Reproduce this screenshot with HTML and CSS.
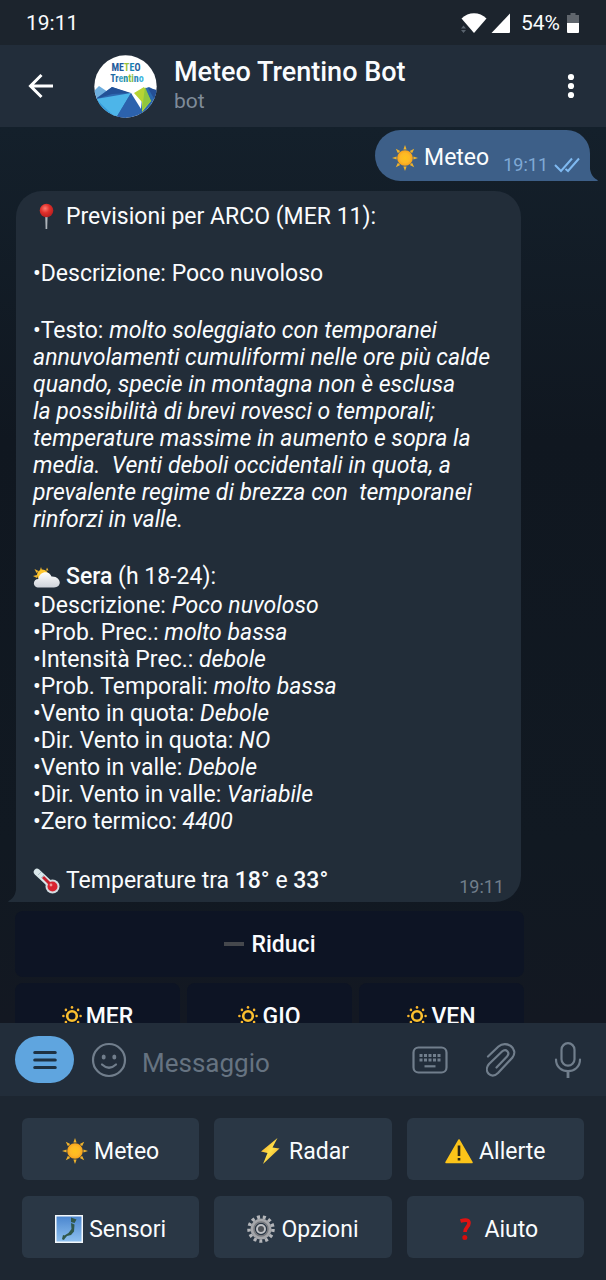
FILE: index.html
```html
<!DOCTYPE html>
<html lang="it">
<head>
<meta charset="utf-8">
<meta name="viewport" content="width=device-width, initial-scale=1">
<title>Meteo Trentino Bot</title>
<link rel="stylesheet" href="styles.css">
</head>
<body>
<svg class="defs" aria-hidden="true">
  <defs>
    <radialGradient id="gold"><stop offset="0" stop-color="#ffc21c"/><stop offset=".6" stop-color="#fdb827"/><stop offset="1" stop-color="#f7a21b"/></radialGradient>
    <linearGradient id="cloud" x1="0" y1="0" x2="0" y2="1"><stop offset="0" stop-color="#fff"/><stop offset="1" stop-color="#cfd3da"/></linearGradient>
    <linearGradient id="bolt" x1="0" y1="0" x2="1" y2="1"><stop offset="0" stop-color="#f59a1c"/><stop offset=".5" stop-color="#ffe14a"/><stop offset="1" stop-color="#ee9a1a"/></linearGradient>
    <linearGradient id="sea" x1="0" y1="0" x2="0" y2="1"><stop offset="0" stop-color="#4b86cf"/><stop offset="1" stop-color="#8dc0ef"/></linearGradient>
    <radialGradient id="pinhead" cx=".4" cy=".35" r=".65"><stop offset="0" stop-color="#ff7b70"/><stop offset=".5" stop-color="#e0302b"/><stop offset="1" stop-color="#b81f1f"/></radialGradient>
  </defs>
  <symbol id="sun" viewBox="0 0 26 26">
    <path fill="#f0b32c" d="M13 0l1.600 4.600h-3.200zM13 26l1.600-4.600h-3.200zM0 13l4.600-1.600v3.200zM26 13l-4.600-1.600v3.200zM3.800 3.800l4.400 2.100-2.300 2.300zM22.200 3.800l-4.400 2.100 2.300 2.300zM3.800 22.200l4.400-2.100-2.300-2.300zM22.200 22.200l-4.400-2.100 2.300-2.300z"/>
    <circle cx="13" cy="13" r="7.800" fill="url(#gold)"/>
  </symbol>
  <symbol id="sunring" viewBox="0 0 20 20">
    <circle cx="10" cy="10" r="4.800" fill="none" stroke="#fbc02f" stroke-width="2.600"/>
    <g fill="#f8b62d"><circle cx="10" cy="1.400" r="1.300"/><circle cx="10" cy="18.600" r="1.300"/><circle cx="1.400" cy="10" r="1.300"/><circle cx="18.600" cy="10" r="1.300"/><circle cx="3.900" cy="3.900" r="1.300"/><circle cx="16.100" cy="3.900" r="1.300"/><circle cx="3.900" cy="16.100" r="1.300"/><circle cx="16.100" cy="16.100" r="1.300"/></g>
  </symbol>
</svg>

<div class="statusbar">
  <span>19:11</span>
  <div class="indicators">
    <svg width="28" height="22" viewBox="0 0 28 22" aria-label="Wi-Fi"><path fill="#fff" d="M14 21L1.500 6.500C8.500-.5 19.500-.5 26.500 6.500z"/><path fill="#59636e" d="M3.500 13.500l2.500 3H1zM3.500 21l2.500-3H1z"/></svg>
    <svg width="20" height="20" viewBox="0 0 20 20" aria-label="Segnale"><path fill="#fff" d="M19 .5v18.500q0 1-1 1H.5z"/></svg>
    <span class="percent">54%</span>
    <svg width="12" height="20" viewBox="0 0 12 20" aria-label="Batteria"><path fill="#60666d" d="M3.500 0h5v2H12v8H0V2h3.500z"/><path fill="#fff" d="M0 10h12v9q0 1-1 1H1q-1 0-1-1z"/></svg>
  </div>
</div>

<header class="topbar">
  <button class="icon-button" aria-label="Indietro"><svg width="26" height="26" viewBox="0 0 26 26" fill="none" stroke="#fff" stroke-width="3"><path d="M13.500 2L2.500 13l11 11M3 13h22"/></svg></button>
  <svg class="avatar" width="63" height="63" viewBox="0 0 63 63" role="img" aria-label="Meteo Trentino">
    <clipPath id="disc"><circle cx="31.500" cy="31.500" r="31.200"/></clipPath>
    <g clip-path="url(#disc)">
      <path fill="#fff" d="M0 0h63v63H0z"/>
      <path fill="#6eaede" d="M0 36l5-5 9 6-12 8H0z"/>
      <path fill="#2e68b0" d="M0 45l18-13 20 7-6 24H0z"/>
      <path fill="#235197" d="M2 44l16-12 19 6-19 1z"/>
      <path fill="#4db5e9" d="M2 44l35-6-15 25H0z"/>
      <path fill="#379bd9" d="M2 44l19 18H0z"/>
      <path fill="#2c62ad" d="M37 38l10 16 4 9H22z"/>
      <path fill="#2b69ae" d="M49 34l6-2 8 4v27H46z"/>
      <path fill="#244f96" d="M54 33l9 2v14z"/>
      <path fill="#b7d433" d="M40 38l10-6 7 14-9 11V47z"/>
      <path fill="#8fc63f" d="M51 32l6 14-9 9z"/>
    </g>
    <g class="logo-text" text-anchor="middle">
      <text x="32" y="16"><tspan fill="#1f5c9d">ME</tspan><tspan fill="#9ac43c">T</tspan><tspan fill="#1685b5">E</tspan><tspan fill="#1f5c9d">O</tspan></text>
      <text x="33" y="27"><tspan fill="#1f6ca5">Tr</tspan><tspan fill="#3fa4c9">e</tspan><tspan fill="#178a9e">n</tspan><tspan fill="#84bd40">ti</tspan><tspan fill="#2383b5">n</tspan><tspan fill="#40b5dd">o</tspan></text>
    </g>
  </svg>
  <div class="peer">
    <h1>Meteo Trentino Bot</h1>
    <p>bot</p>
  </div>
  <button class="icon-button" aria-label="Altre opzioni"><svg width="8" height="26" viewBox="0 0 8 26" fill="#fff"><circle cx="4" cy="4" r="3.100"/><circle cx="4" cy="13" r="3.100"/><circle cx="4" cy="22" r="3.100"/></svg></button>
</header>

<main class="chat">
  <div class="bubble outgoing">
    <svg width="26" height="26" role="img" aria-label="Sole"><use href="#sun"/></svg>
    <span>Meteo</span>
    <time class="stamp">19:11</time>
    <svg class="ticks" width="26" height="16" viewBox="0 0 26 16" fill="none" stroke="#7fb9f0" stroke-width="2" aria-label="Letto"><path d="M1 8l6 6L18 1.500M11.500 12l2.500 2L25 1.500"/></svg>
    <svg class="tail-out" width="18" height="26" viewBox="0 0 18 26" aria-hidden="true"><path fill="#3d5f88" d="M0 0h9.500v8c0 8 2 14 8 17 .5 1 0 1-1 1H0z"/></svg>
  </div>

  <section class="group">
    <article class="bubble incoming">
      <p class="line"><svg class="emoji" width="27" height="27" viewBox="0 0 27 27" role="img" aria-label="Puntina"><path fill="#aeb4ba" d="M12.200 12h2.400l-.4 14h-1.600z"/><circle cx="13.500" cy="7.500" r="6.800" fill="url(#pinhead)"/></svg>Previsioni per ARCO (MER 11):</p>
      <p>•Descrizione: Poco nuvoloso</p>
      <p>•Testo: <i>molto soleggiato con temporanei annuvolamenti cumuliformi nelle ore più calde quando, specie in montagna non è esclusa la&nbsp;possibilità di brevi rovesci o temporali; temperature massime in aumento e sopra la media.&nbsp; Venti deboli occidentali in quota, a prevalente regime di brezza con&nbsp; temporanei rinforzi in valle.</i></p>
      <div class="period">
        <p class="line"><svg class="emoji" width="27" height="27" viewBox="0 0 27 27" role="img" aria-label="Poco nuvoloso"><path fill="#f3b72d" d="M8 4l1 3-2 0zM1.500 6l4 2-2 2zM14 4.500l-1 3 2.500 0zM0 13l4-1v3z"/><circle cx="9.500" cy="12" r="5.500" fill="#ffc730"/><path fill="url(#cloud)" d="M6 24.500C-1 24.500-.5 16 5.500 16 6 8.500 16 6.500 18.500 13.500c10-.5 11 11 2.500 11z"/></svg><span><b>Sera</b> (h 18-24):</span></p>
        <ul>
          <li>•Descrizione: <i>Poco nuvoloso</i></li>
          <li>•Prob. Prec.: <i>molto bassa</i></li>
          <li>•Intensità Prec.: <i>debole</i></li>
          <li>•Prob. Temporali: <i>molto bassa</i></li>
          <li>•Vento in quota: <i>Debole</i></li>
          <li>•Dir. Vento in quota: <i>NO</i></li>
          <li>•Vento in valle: <i>Debole</i></li>
          <li>•Dir. Vento in valle: <i>Variabile</i></li>
          <li>•Zero termico: <i>4400</i></li>
        </ul>
      </div>
      <div class="last-line">
        <p class="line"><svg class="emoji" width="27" height="27" viewBox="0 0 27 27" role="img" aria-label="Termometro"><path stroke="#d9e6ea" stroke-width="6.500" stroke-linecap="round" d="M4 5l15 14"/><path stroke="#aabfc8" stroke-width="1" d="M5 8l3-3M8 11l3-3"/><circle cx="19.500" cy="19.500" r="7" fill="#d4dde1"/><path stroke="#c8202d" stroke-width="3" d="M10 10l9 9"/><circle cx="19.500" cy="19.500" r="5" fill="#d8232f"/><circle cx="18" cy="18" r="1.400" fill="#f29a9a"/></svg><span>Temperature tra <b>18°</b> e <b>33°</b></span></p>
        <time class="stamp">19:11</time>
      </div>
      <svg class="tail-in" width="18" height="26" viewBox="0 0 18 26" aria-hidden="true"><path fill="#222d39" d="M18 0H8.500v8c0 8-2 14-8 17-.5 1 0 1 1 1H18z"/></svg>
    </article>

    <div class="inline-keys">
      <button class="wide"><svg width="20" height="20" viewBox="0 0 20 20" aria-hidden="true"><path fill="#45484d" d="M0 8h20v4H0z"/></svg><span>Riduci</span></button>
      <button class="day"><svg width="20" height="20" aria-hidden="true"><use href="#sunring"/></svg><span>MER</span></button>
      <button class="day"><svg width="20" height="20" aria-hidden="true"><use href="#sunring"/></svg><span>GIO</span></button>
      <button class="day"><svg width="20" height="20" aria-hidden="true"><use href="#sunring"/></svg><span>VEN</span></button>
    </div>
  </section>
</main>

<form class="composer">
  <button type="button" class="menu" aria-label="Menu"><svg width="24" height="20" viewBox="0 0 24 20" stroke="#1d3142" stroke-width="3.200" stroke-linecap="round"><path d="M1.800 2.500h20.400M1.800 10h20.400M1.800 17.500h20.400"/></svg></button>
  <button type="button" class="icon-button" aria-label="Emoji"><svg width="36" height="36" viewBox="0 0 36 36" fill="none" stroke="#717e8c" stroke-width="2.200" stroke-linecap="round"><circle cx="18" cy="18" r="16"/><path d="M11 22.500q7 6.500 14 0"/><g fill="#717e8c" stroke="none"><ellipse cx="12.700" cy="15" rx="2" ry="2.500"/><ellipse cx="23.300" cy="15" rx="2" ry="2.500"/></g></svg></button>
  <input type="text" placeholder="Messaggio" aria-label="Messaggio">
  <div class="tools">
    <button type="button" class="icon-button" aria-label="Tastiera"><svg width="36" height="28" viewBox="0 0 36 28" fill="none" stroke="#717e8c" stroke-width="2.200"><rect x="1.500" y="1.500" width="33" height="25" rx="5"/><path stroke-width="3" stroke-dasharray="3 1.500" d="M7.500 9.500h21M7.500 14h21"/><path d="M12.500 20.300h11"/></svg></button>
    <button type="button" class="icon-button" aria-label="Allega"><svg width="30" height="36" viewBox="0 0 30 36" fill="none" stroke="#717e8c" stroke-width="2.200" stroke-linecap="round" stroke-linejoin="round"><path d="M2 14.500L12.500 4.500C20-2 33 6 26.500 15.500L12 31C5 38-3 29 3 22L16 9.500c4-3.500 8.500 1 5 5L10.500 25.500"/></svg></button>
    <button type="button" class="icon-button" aria-label="Messaggio vocale"><svg width="28" height="36" viewBox="0 0 28 36" fill="none" stroke="#717e8c" stroke-width="2.200" stroke-linecap="round"><rect x="7.500" y="1.200" width="13" height="22.500" rx="6.500"/><path d="M2 17.500c0 15.500 24 15.500 24 0"/><path stroke-width="2.800" stroke-linecap="butt" d="M14 29v7"/></svg></button>
  </div>
</form>

<nav class="reply-keys" aria-label="Tastiera del bot">
  <button><svg width="26" height="26" aria-hidden="true"><use href="#sun"/></svg><span>Meteo</span></button>
  <button><svg width="26" height="26" viewBox="0 0 26 26" aria-hidden="true"><path fill="url(#bolt)" d="M20.500 0L4 13.500l6.500 1.500L6 26l16.500-15.500-7-1z"/></svg><span>Radar</span></button>
  <button><svg width="28" height="26" viewBox="0 0 28 26" aria-hidden="true"><path fill="#fcc419" stroke="#fcc419" stroke-width="1.500" stroke-linejoin="round" d="M14 2l13 22.500H1z"/><path stroke="#2b2616" stroke-width="2.600" d="M14 7.500v10.500M14 20v2.600"/></svg><span>Allerte</span></button>
  <button><svg width="28" height="28" viewBox="0 0 28 28" aria-hidden="true"><path fill="#f3f7fa" d="M0 0h28v28H0z"/><path fill="url(#sea)" d="M1.500 1.500h25v25h-25z"/><path fill="#31584a" d="M16 2.500l5.500 2-2 3.500-3.500-1zM16 8l3.500 1.500-.5 7-3 3.500-4 1-2.500 3-2 1 1-4 5-3 3-4zM8 20l3 1-2 4-2-1z"/></svg><span>Sensori</span></button>
  <button><svg width="28" height="28" viewBox="0 0 28 28" fill="none" aria-hidden="true"><circle cx="14" cy="14" r="12" stroke="#b4b6ba" stroke-width="3.500" stroke-dasharray="3 2.800"/><circle cx="14" cy="14" r="8.500" stroke="#a4a6aa" stroke-width="4"/><circle cx="14" cy="14" r="7" stroke="#77797e" stroke-width="1.500"/><circle cx="14" cy="14" r="4" fill="#4e5258" stroke="#bfc1c5" stroke-width="2"/></svg><span>Opzioni</span></button>
  <button><svg width="26" height="26" viewBox="0 0 26 26" fill="none" aria-hidden="true"><path stroke="#e01212" stroke-width="3.600" d="M8.500 5q8.500-2.500 8.500 2c0 4-4 4-4 9"/><circle cx="12.800" cy="21.500" r="2.500" fill="#d60d0d"/></svg><span>Aiuto</span></button>
</nav>
</body>
</html>
```
FILE: styles.css
```css
* {
  box-sizing: border-box;
}

body {
  margin: 0;
  height: 100vh;
  display: flex;
  flex-direction: column;
  background: #1d2631;
  color: #fafcfe;
  font: 23px/27px Roboto, "Noto Sans", sans-serif;
}

h1, p, ul {
  margin: 0;
  padding: 0;
  font-size: inherit;
}

svg {
  display: block;
  flex: none;
}

b {
  font-weight: 500;
}

button {
  border: 0;
  padding: 0;
  background: none;
  color: inherit;
  font: inherit;
  display: flex;
  align-items: center;
  justify-content: center;
}

.defs {
  position: absolute;
  width: 0;
  height: 0;
}

.statusbar {
  display: flex;
  justify-content: space-between;
  align-items: center;
  height: 45px;
  padding: 1px 27px 0 26px;
  background: #1c242d;
  font-size: 21px;
}

.indicators {
  display: flex;
  align-items: center;
  gap: 3px;
}

.percent {
  margin: 0 4px 0 7px;
}

.topbar {
  display: flex;
  align-items: center;
  height: 82px;
  padding: 0 31px 0 28px;
  background: #222d3a;
}

.avatar {
  margin: 0 17px 0 40px;
}

.logo-text {
  font: 700 10px/10px "Liberation Sans Narrow", "Roboto Condensed", Roboto, sans-serif;
}

.peer {
  flex: 1;
}

.peer h1 {
  font-size: 27px;
  font-weight: 500;
  line-height: 31px;
}

.peer p {
  color: #7f8b99;
  font-size: 21px;
}

.chat {
  flex: 1;
  min-height: 0;
  overflow: hidden;
  display: flex;
  flex-direction: column;
  gap: 10px;
  padding: 3px 0 0;
  background: linear-gradient(180deg, #14202b 0%, #101720 35%, #111922 80%, #131822 100%);
}

.bubble {
  position: relative;
}

.outgoing {
  flex: none;
  align-self: flex-end;
  display: flex;
  align-items: center;
  height: 51px;
  margin-right: 16px;
  padding: 4px 10px 0 17px;
  border-radius: 26px 24px 0 26px;
  background: #3d5f88;
}

.outgoing span {
  margin: 0 14px 0 6px;
}

.stamp {
  color: #717e8b;
  font-size: 18px;
  line-height: 18px;
}

.outgoing .stamp {
  margin: 15px 6px 0 0;
  color: #7fa9d6;
}

.ticks {
  margin-top: 15px;
}

.tail-out {
  position: absolute;
  right: -8px;
  bottom: 0;
}

.group {
  width: 84%;
  margin-left: 15px;
  display: flex;
  flex-direction: column;
  gap: 9px;
}

.incoming {
  display: flex;
  flex-direction: column;
  gap: 30px;
  margin: 0 3px 0 1px;
  padding: 12px 17px 6px;
  border-radius: 26px 26px 26px 0;
  background: #222d39;
}

.line {
  display: flex;
  align-items: center;
  gap: 6px;
}

.period ul {
  margin-top: 2px;
  list-style: none;
}

.last-line {
  display: flex;
  justify-content: space-between;
}

.last-line .stamp {
  margin-top: 13px;
}

.tail-in {
  position: absolute;
  left: -8px;
  bottom: 0;
}

.inline-keys {
  display: grid;
  grid-template-columns: repeat(3, 1fr);
  gap: 6px 7px;
  font-weight: 500;
}

.inline-keys button {
  height: 66px;
  border-radius: 8px;
  background: #0d1424;
  gap: 4px;
}

.inline-keys .wide {
  grid-column: 1 / -1;
  gap: 8px;
}

.composer {
  display: flex;
  align-items: center;
  height: 73px;
  padding: 0 24px 0 15px;
  background: #222d3a;
}

.menu {
  width: 59px;
  height: 47px;
  margin-right: 17px;
  border-radius: 24px;
  background: #5fa5df;
}

.composer input {
  flex: 1;
  min-width: 0;
  margin: 6px 12px 0 15px;
  padding: 0;
  border: 0;
  outline: 0;
  background: none;
  color: inherit;
  font: inherit;
  font-size: 26px;
  line-height: 32px;
}

.composer input::placeholder {
  color: #667381;
  opacity: 1;
}

.tools {
  display: flex;
  align-items: center;
  gap: 38px;
}

.reply-keys {
  display: grid;
  grid-template-columns: repeat(3, 1fr);
  gap: 16px 15px;
  padding: 22px;
  background: #1d2631;
}

.reply-keys button {
  height: 62px;
  padding-top: 4px;
  border-radius: 6px;
  background: #2a3745;
  gap: 6px;
}
```
